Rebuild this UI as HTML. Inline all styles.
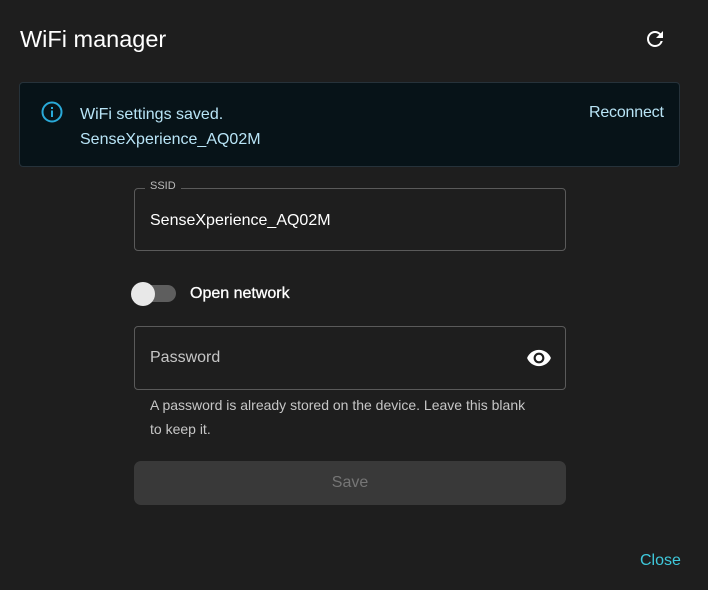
<!DOCTYPE html>
<html><head><meta charset="utf-8"><style>
*{margin:0;padding:0;box-sizing:border-box}
body{width:708px;height:590px;background:#1e1e1e;font-family:"Liberation Sans",Arial,sans-serif;color:#fff;position:relative;overflow:hidden}
.a{position:absolute}
</style></head><body>
<div class="a" style="left:20px;top:26px;font-size:23.5px;color:#fff">WiFi manager</div>
<svg class="a" style="left:643px;top:27px" width="24" height="24" viewBox="0 0 24 24"><path fill="#fff" d="M17.65 6.35A7.958 7.958 0 0 0 12 4c-4.42 0-7.99 3.58-7.99 8s3.57 8 7.99 8c3.73 0 6.84-2.55 7.73-6h-2.08A5.99 5.99 0 0 1 12 18c-3.31 0-6-2.690-6-6s2.69-6 6-6c1.66 0 3.14.69 4.220 1.78L13 11h7V4l-2.35 2.35z"/></svg>
<div class="a" style="left:19px;top:82px;width:661px;height:85px;background:#071318;border:1px solid #26323a;border-radius:4px"></div>
<svg class="a" style="left:40px;top:100px" width="24" height="24" viewBox="0 0 24 24"><circle cx="12" cy="12" r="9.5" fill="none" stroke="#29a9d8" stroke-width="2"/><rect x="11" y="10.5" width="2" height="6.5" fill="#29a9d8"/><rect x="11" y="7" width="2" height="2" fill="#29a9d8"/></svg>
<div class="a" style="left:80px;top:102px;font-size:16px;color:#b8e4f6;line-height:25px">WiFi settings saved.<br>SenseXperience_AQ02M</div>
<div class="a" style="left:589px;top:104px;font-size:16px;color:#b8e4f6;letter-spacing:-0.2px">Reconnect</div>
<div class="a" style="left:134px;top:188px;width:432px;height:63px;border:1px solid #5a5a5a;border-radius:4px"></div>
<div class="a" style="left:145px;top:180px;font-size:11px;color:#bbb;background:#1e1e1e;padding:0 5px">SSID</div>
<div class="a" style="left:150px;top:212px;font-size:16px;color:#fff">SenseXperience_AQ02M</div>
<div class="a" style="left:134px;top:285px;width:42px;height:17px;border-radius:9px;background:#5e5e5e"></div>
<div class="a" style="left:131px;top:282px;width:24px;height:24px;border-radius:50%;background:#e8e8e8"></div>
<div class="a" style="left:190px;top:285px;font-size:16px;color:#fff;-webkit-text-stroke:0.3px #fff">Open network</div>
<div class="a" style="left:134px;top:326px;width:432px;height:64px;border:1px solid #5a5a5a;border-radius:4px"></div>
<div class="a" style="left:150px;top:349px;font-size:16px;color:#c6c6c6">Password</div>
<svg class="a" style="left:526px;top:345px" width="26" height="26" viewBox="0 0 24 24"><path fill="#fff" d="M12 4.5C7 4.5 2.73 7.61 1 12c1.730 4.39 6 7.5 11 7.5s9.27-3.11 11-7.5c-1.73-4.39-6-7.5-11-7.5zM12 17c-2.76 0-5-2.24-5-5s2.24-5 5-5 5 2.24 5 5-2.24 5-5 5zm0-8c-1.66 0-3 1.34-3 3s1.34 3 3 3 3-1.34 3-3-1.34-3-3-3z"/></svg>
<div class="a" style="left:150px;top:393px;font-size:14px;color:#c6c6c6;line-height:24px">A password is already stored on the device. Leave this blank<br>to keep it.</div>
<div class="a" style="left:134px;top:461px;width:432px;height:44px;border-radius:7px;background:#393939;color:#767676;font-size:16px;text-align:center;line-height:44px">Save</div>
<div class="a" style="left:640px;top:552px;font-size:16px;color:#3fc9dc">Close</div>
</body></html>
